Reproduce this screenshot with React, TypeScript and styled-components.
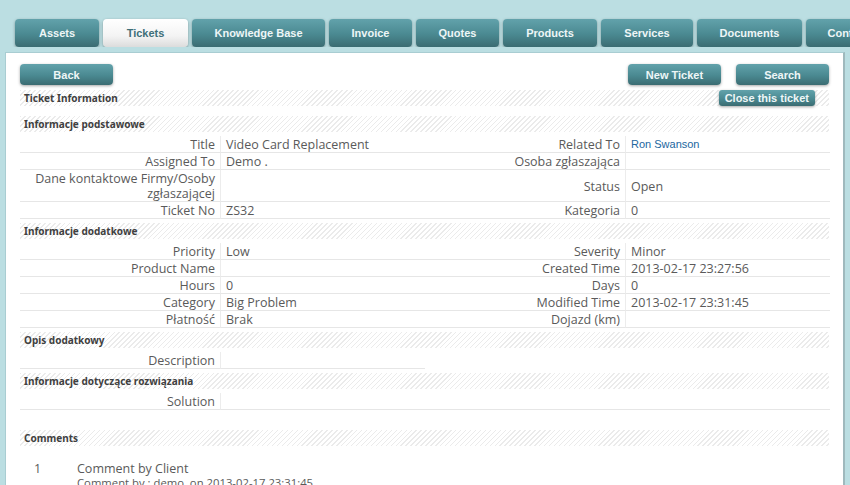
import React from "react";
import styled, { createGlobalStyle, css } from "styled-components";

const Global = createGlobalStyle`
  html, body { margin: 0; padding: 0; }
  body {
    background: #bbdee2;
    font-family: "Open Sans", "Noto Sans", sans-serif;
    overflow: hidden;
  }
`;

const Page = styled.div`
  width: 850px;
  height: 485px;
  overflow: hidden;
`;

const TabBar = styled.nav`
  display: flex;
  gap: 4px;
  padding: 19px 0 0 15px;
  height: 28px;
  white-space: nowrap;
  overflow: hidden;
`;

const tealButton = css`
  background: linear-gradient(#62a2ab, #4a8991 55%, #3b6c72);
  color: #eef6f7;
  font-family: "Liberation Sans", Arial, sans-serif;
  font-weight: bold;
  font-size: 11px;
  border: none;
  box-shadow: 0 1px 3px rgba(0, 0, 0, 0.35);
`;

const Tab = styled.div<{ $active?: boolean; $w: number }>`
  flex: none;
  width: ${(p) => p.$w}px;
  height: 28px;
  line-height: 28px;
  text-align: center;
  border-radius: 4px;
  ${tealButton}
  ${(p) =>
    p.$active &&
    css`
      background: linear-gradient(#ffffff, #f4f4f4 60%, #dcdcdc);
      color: #3f6f79;
    `}
`;

const Panel = styled.main`
  display: flex;
  flex-direction: column;
  margin: 5px 5px 0 5px;
  background: #fff;
  border: 1px solid #a9cdd2;
  border-right: 2px solid #9fb9bd;
  padding: 11px 14px 0 14px;
  height: 440px;
  box-sizing: border-box;
`;

const ButtonRow = styled.div`
  display: flex;
  align-items: center;
  gap: 15px;
  height: 21px;
  margin-bottom: 5px;
`;

const Spacer = styled.div`
  flex: 1;
`;

const Button = styled.button`
  ${tealButton}
  width: 93px;
  height: 21px;
  border-radius: 4px;
  padding: 0;
  cursor: pointer;
`;

const SmallButton = styled.button`
  ${tealButton}
  height: 16px;
  padding: 0 6px;
  border-radius: 3px;
  position: absolute;
  right: 14px;
  top: 0;
`;

const SectionHeader = styled.div<{ $gap?: number }>`
  position: relative;
  flex: none;
  height: 16px;
  line-height: 16px;
  padding-left: 4px;
  margin-top: ${(p) => p.$gap ?? 0}px;
  margin-bottom: 4px;
  font-family: "Noto Sans", sans-serif;
  font-weight: bold;
  font-size: 10px;
  color: #404040;
  background: repeating-linear-gradient(
    135deg,
    #ebebeb 0px,
    #ebebeb 1px,
    #ffffff 1px,
    #ffffff 3.5px
  );
`;

const Grid = styled.div<{ $cols?: number; $width?: string }>`
  display: grid;
  grid-template-columns: ${(p) => ((p.$cols ?? 4) === 4 ? "201px 204px 201px 204px" : "201px 204px")};
  width: ${(p) => p.$width ?? "810px"};
  margin-bottom: 4px;
`;

const Label = styled.div`
  display: flex;
  align-items: center;
  justify-content: flex-end;
  text-align: right;
  padding: 1px 5px 0 4px;
  font-size: 12.5px;
  line-height: 15px;
  color: #5a5a5a;
  border-right: 1px solid #ececec;
  border-bottom: 1px solid #e6e6e6;
`;

const Value = styled.div<{ $link?: boolean; $span?: boolean }>`
  padding: 1px 4px 0 5px;
  font-size: 12.5px;
  line-height: 15px;
  color: #5a5a5a;
  border-bottom: 1px solid #e6e6e6;
  display: flex;
  align-items: center;
  ${(p) => p.$span && css`grid-column: 2 / -1;`}
  ${(p) =>
    p.$link &&
    css`
      align-items: flex-start;
      font-family: "Liberation Sans", Arial, sans-serif;
      font-size: 11px;
      color: #2367a0;
    `}
`;

const Comments = styled.div`
  display: grid;
  grid-template-columns: 43px 1fr;
  padding: 12px 0 0 14px;
  color: #5a5a5a;
`;

const CommentNo = styled.div`
  font-size: 12.5px;
  line-height: 14px;
`;

const CommentBody = styled.div`
  font-size: 12.5px;
  line-height: 14px;
`;

const CommentMeta = styled.div`
  font-size: 11.3px;
  line-height: 14px;
`;

type Cell = { label: string; value?: string; link?: boolean };

const basic: [Cell, Cell][] = [
  [{ label: "Title", value: "Video Card Replacement" }, { label: "Related To", value: "Ron Swanson", link: true }],
  [{ label: "Assigned To", value: "Demo ." }, { label: "Osoba zgłaszająca" }],
  [{ label: "Dane kontaktowe Firmy/Osoby zgłaszającej" }, { label: "Status", value: "Open" }],
  [{ label: "Ticket No", value: "ZS32" }, { label: "Kategoria", value: "0" }],
];

const extra: [Cell, Cell][] = [
  [{ label: "Priority", value: "Low" }, { label: "Severity", value: "Minor" }],
  [{ label: "Product Name" }, { label: "Created Time", value: "2013-02-17 23:27:56" }],
  [{ label: "Hours", value: "0" }, { label: "Days", value: "0" }],
  [{ label: "Category", value: "Big Problem" }, { label: "Modified Time", value: "2013-02-17 23:31:45" }],
  [{ label: "Płatność", value: "Brak" }, { label: "Dojazd (km)" }],
];

const tabs: [string, number][] = [
  ["Assets", 84],
  ["Tickets", 85],
  ["Knowledge Base", 133],
  ["Invoice", 83],
  ["Quotes", 83],
  ["Products", 94],
  ["Services", 92],
  ["Documents", 105],
  ["Contacts", 90],
];

function Rows({ rows }: { rows: [Cell, Cell][] }) {
  return (
    <Grid>
      {rows.map((r, i) => (
        <React.Fragment key={i}>
          {r.map((c, j) => (
            <React.Fragment key={j}>
              <Label>{c.label}</Label>
              <Value $link={c.link}>{c.value ?? ""}</Value>
            </React.Fragment>
          ))}
        </React.Fragment>
      ))}
    </Grid>
  );
}

export default function App() {
  return (
    <Page>
      <Global />
      <TabBar>
        {tabs.map(([t, w]) => (
          <Tab key={t} $w={w} $active={t === "Tickets"}>
            {t}
          </Tab>
        ))}
      </TabBar>
      <Panel>
        <ButtonRow>
          <Button>Back</Button>
          <Spacer />
          <Button>New Ticket</Button>
          <Button>Search</Button>
        </ButtonRow>
        <SectionHeader>
          Ticket Information
          <SmallButton>Close this ticket</SmallButton>
        </SectionHeader>
        <SectionHeader $gap={6}>Informacje podstawowe</SectionHeader>
        <Rows rows={basic} />
        <SectionHeader>Informacje dodatkowe</SectionHeader>
        <Rows rows={extra} />
        <SectionHeader>Opis dodatkowy</SectionHeader>
        <Grid $cols={2} $width="405px">
          <Label>Description</Label>
          <Value />
        </Grid>
        <SectionHeader>Informacje dotyczące rozwiązania</SectionHeader>
        <Grid>
          <Label>Solution</Label>
          <Value $span />
        </Grid>
        <SectionHeader $gap={16}>Comments</SectionHeader>
        <Comments>
          <CommentNo>1</CommentNo>
          <div>
            <CommentBody>Comment by Client</CommentBody>
            <CommentMeta>Comment by : demo&nbsp; on 2013-02-17 23:31:45</CommentMeta>
          </div>
        </Comments>
      </Panel>
    </Page>
  );
}
